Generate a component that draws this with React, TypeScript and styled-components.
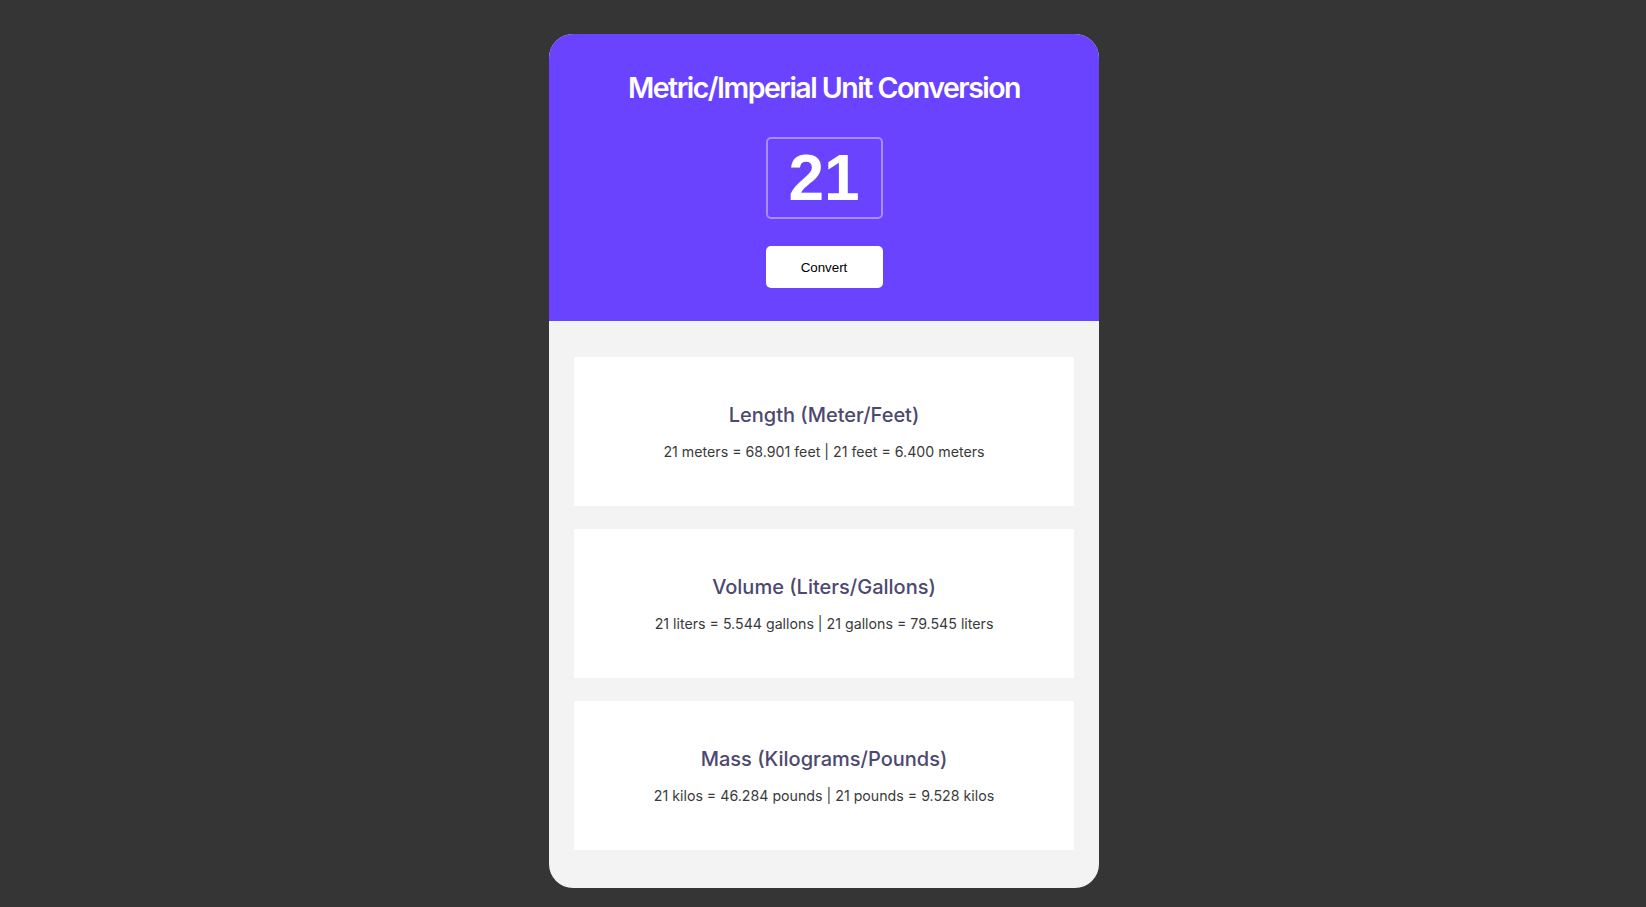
import React from "react";
import styled, { createGlobalStyle } from "styled-components";

const Global = createGlobalStyle`
  html, body { margin: 0; padding: 0; }
  body {
    background: #353535;
    font-family: Inter, "Noto Sans", sans-serif;
    min-height: 907px;
  }
`;

const Page = styled.div`
  display: flex;
  justify-content: center;
  padding: 34px 0 0 2px;
`;

const Card = styled.main`
  width: 550px;
  border-radius: 24px;
  overflow: hidden;
  background: #f3f3f3;
  display: flex;
  flex-direction: column;
`;

const Header = styled.header`
  background: #6943ff;
  display: flex;
  flex-direction: column;
  align-items: center;
  padding: 36px 0 33px;
`;

const Title = styled.h1`
  margin: 0 0 32px;
  color: #fff;
  font-family: Inter, sans-serif;
  font-weight: 600;
  font-size: 28.5px;
  line-height: 35px;
  letter-spacing: -1.5px;
`;

const NumberInput = styled.input`
  box-sizing: border-box;
  width: 117px;
  height: 82px;
  background: transparent;
  border: 2px solid rgba(255, 255, 255, 0.4);
  border-radius: 5px;
  color: #fff;
  font-family: "Liberation Sans", Arial, sans-serif;
  font-weight: 700;
  font-size: 64px;
  text-align: center;
  padding: 0;
  outline: none;
  margin-bottom: 27px;
`;

const ConvertButton = styled.button`
  width: 117px;
  height: 42px;
  background: #fff;
  border: none;
  border-radius: 5px;
  color: #000;
  font-family: "Liberation Sans", Arial, sans-serif;
  font-size: 13.33px;
  cursor: pointer;
`;

const Results = styled.section`
  display: flex;
  flex-direction: column;
  gap: 23px;
  padding: 36px 25px 38px;
`;

const Panel = styled.div`
  height: 149px;
  background: #fff;
  display: flex;
  flex-direction: column;
  align-items: center;
  justify-content: center;
`;

const PanelTitle = styled.h2`
  margin: 0 0 14px;
  color: #4d4870;
  font-weight: 500;
  font-size: 20px;
  line-height: 26px;
`;

const PanelText = styled.p`
  margin: 0;
  color: #3a3a3a;
  font-size: 14.2px;
  line-height: 20px;
`;

const rows = [
  {
    title: "Length (Meter/Feet)",
    text: "21 meters = 68.901 feet | 21 feet = 6.400 meters",
  },
  {
    title: "Volume (Liters/Gallons)",
    text: "21 liters = 5.544 gallons | 21 gallons = 79.545 liters",
  },
  {
    title: "Mass (Kilograms/Pounds)",
    text: "21 kilos = 46.284 pounds | 21 pounds = 9.528 kilos",
  },
];

export default function App() {
  return (
    <>
      <Global />
      <Page>
        <Card>
          <Header>
            <Title>Metric/Imperial Unit Conversion</Title>
            <NumberInput type="text" defaultValue="21" />
            <ConvertButton>Convert</ConvertButton>
          </Header>
          <Results>
            {rows.map((r) => (
              <Panel key={r.title}>
                <PanelTitle>{r.title}</PanelTitle>
                <PanelText>{r.text}</PanelText>
              </Panel>
            ))}
          </Results>
        </Card>
      </Page>
    </>
  );
}
